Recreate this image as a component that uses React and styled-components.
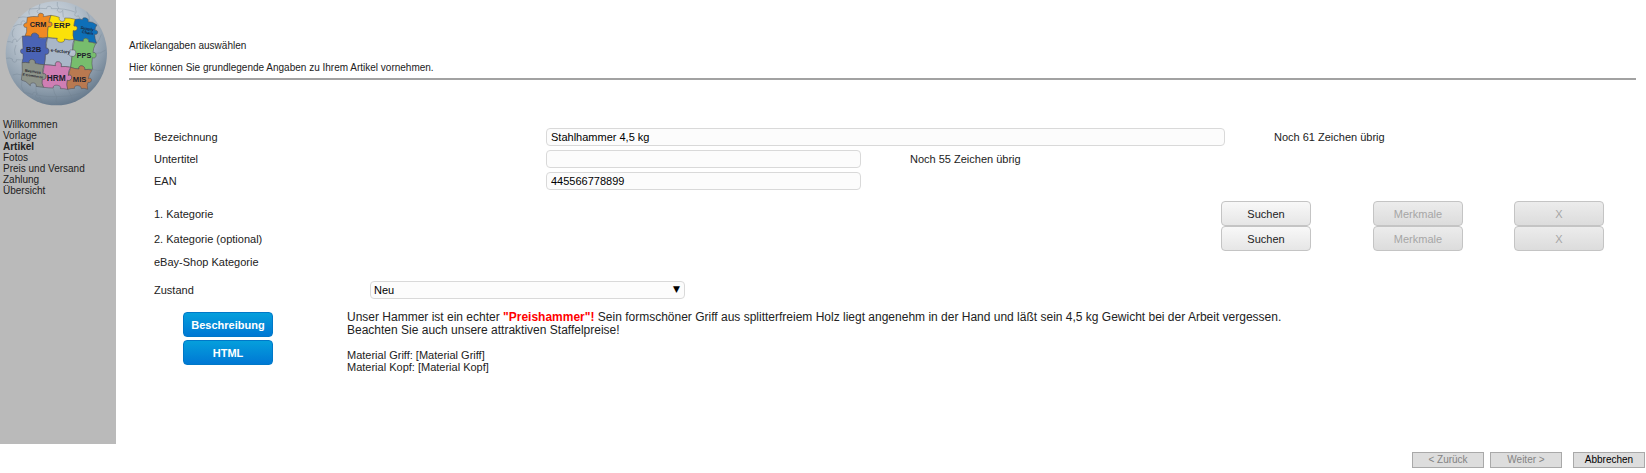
import styled, { createGlobalStyle } from "styled-components";

const GlobalStyle = createGlobalStyle`
  * { box-sizing: border-box; }
  body {
    margin: 0; background-color: #fff; color: #222;
    font-family: "Liberation Sans", Arial, sans-serif; font-size: 11px;
  }
  button, input, select { font-family: inherit; font-size: 11px; }
`;

const Main = styled.div`
  display: flex;
  min-height: 444px;
`;

const Sidebar = styled.aside`
  flex: none; width: 116px;
  background-color: #bababa;
`;

const Globe = styled.svg`
  display: block; width: 116px; height: 110px;
`;

const Menu = styled.nav`
  display: flex; flex-direction: column;
  padding: 9px 3px;
`;

const MenuLink = styled.a`
  font-size: 10px; line-height: 11px; color: #222; text-decoration: none;
  font-weight: ${(props) => (props.$active ? "bold" : "normal")};
`;

const Content = styled.main`
  flex: 1; padding: 40px 10px 0 13px;
`;

const Intro = styled.header`
  padding-bottom: 4px; border-bottom: 2px solid #a2a2a2;
`;

const Title = styled.h1`
  margin: 0 0 10px; font-size: 10px; line-height: 12px; font-weight: normal;
`;

const Text = styled.p`
  margin: 0; font-size: 10px; line-height: 12px;
`;

const Form = styled.form`
  padding: 46px 32px 0 25px;
`;

const Row = styled.div`
  display: flex; align-items: center;
  height: ${(props) => props.$height || 22}px;
`;

const Label = styled.label`
  flex: none; line-height: 14px;
  width: ${(props) => props.$width || 392}px;
`;

const Input = styled.input`
  height: 18px; padding: 0 4px;
  flex: ${(props) => (props.$wide ? "1" : "0 0 315px")};
  border: 1px solid #d9d9d9; border-radius: 4px;
  background-color: #fcfcfc; color: #000;
`;

const Counter = styled.span`
  flex: none; margin-left: 49px;
  width: ${(props) => (props.$wide ? "330px" : "auto")};
`;

const Categories = styled.div`
  padding: 9px 0 8px;
`;

const CategoryRow = styled.div`
  display: flex; align-items: center; justify-content: space-between;
  height: 25px;
`;

const Actions = styled.div`
  display: flex;
`;

const Btn = styled.button`
  width: 90px; height: 25px; padding: 0;
  border: 1px solid #c4c4c4; border-radius: 4px;
  background: linear-gradient(#f8f8f8, #e6e6e6); color: #222;
  &:disabled {
    background: linear-gradient(#ececec, #dcdcdc); color: #a6a6a6;
  }
  &:nth-child(2) { margin-left: 62px; }
  &:nth-child(3) { margin-left: 51px; }
`;

const SelectBox = styled.div`
  position: relative; width: 315px;
  &::after {
    content: "▼"; position: absolute; right: 5px; top: 2px;
    font-family: "DejaVu Sans", sans-serif; font-size: 9px; line-height: 13px; color: #000;
    pointer-events: none;
  }
`;

const Select = styled.select`
  display: block; appearance: none;
  width: 100%; height: 18px; padding: 0 3px;
  border: 1px solid #d9d9d9; border-radius: 4px;
  background-color: #fcfcfc; color: #000;
`;

const Details = styled.div`
  display: flex; padding-top: 12px;
`;

const Tabs = styled.div`
  display: flex; flex-direction: column; gap: 3px;
  width: 193px; padding: 1px 0 0 29px;
`;

const TabBtn = styled.button`
  width: 90px; height: 25px; padding: 0;
  border: 1px solid #0078c8; border-radius: 4px;
  background: linear-gradient(#059fdc, #0078d4);
  color: #fff; font-weight: bold;
`;

const Description = styled.div`
  flex: 1; font-size: 12px; line-height: 13px;
  strong { color: #f00; }
`;

const Material = styled.p`
  margin: 12px 0 0; font-size: 11px; line-height: 12px;
`;

const Footer = styled.footer`
  display: flex; justify-content: flex-end; gap: 6px;
  padding: 8px 1px 5px;
`;

const NavBtn = styled.button`
  width: 72px; height: 16px; padding: 0;
  border: 1px solid #a9a9a9; background-color: #ddd; color: #000;
  && { font-size: 10px; line-height: 12px; }
  &:disabled { color: #838383; }
  &:last-child { margin-left: 5px; }
`;

const menu = ["Willkommen", "Vorlage", "Artikel", "Fotos", "Preis und Versand", "Zahlung", "Übersicht"];

const categories = ["1. Kategorie", "2. Kategorie (optional)"];

const pieces = [
  { fill: "#a9b7c8", d: "M142 113 Q160 116 172 114 C166 127 196 128 191 115 Q206 121 223 118 Q214 134 218 150 C202 146 202 170 216 169 Q215 184 212 202 Q194 198 183 200 C190 182 160 180 167 197 Q150 194 133 194 Q136 176 136 162 C148 168 150 140 138 145 Z" },
  { fill: "#f08a24", d: "M82 52 Q98 48 115 50 C110 37 136 36 130 50 Q140 48 153 46 Q147 58 147 67 C160 61 160 85 145 80 Q142 98 143 112 Q128 116 115 113 C122 98 90 94 95 109 Q84 108 75 108 Q82 96 80 82 C68 84 68 68 80 69 Z" },
  { fill: "#fbe109", d: "M153 46 Q168 48 178 52 C174 67 198 69 194 54 Q210 53 226 58 Q221 70 222 78 C236 74 235 97 220 92 Q218 107 223 118 Q206 122 193 117 C199 131 164 130 172 115 Q158 114 143 112 Q142 96 145 80 C160 85 160 61 147 67 Z" },
  { fill: "#0e6fb8", d: "M226 58 Q239 55 248 59 C245 49 270 53 264 65 Q277 64 291 75 Q284 82 285 91 C296 88 296 106 284 103 Q284 116 290 130 Q276 126 266 126 C269 114 247 110 250 124 Q236 124 222 119 Q218 107 220 92 C236 97 236 74 222 78 Z" },
  { fill: "#4a63b5", d: "M67 108 Q84 108 95 109 C90 94 122 98 115 113 Q128 116 142 113 Q135 130 138 145 C150 140 150 168 136 162 Q136 180 133 194 Q119 194 105 190 C108 175 84 174 88 189 Q78 186 66 188 Q71 174 69 161 C59 162 59 144 69 147 Z" },
  { fill: "#77bd6d", d: "M223 120 Q238 124 250 124 C247 110 269 114 266 126 Q276 126 287 131 Q279 146 279 158 C292 153 292 179 277 173 Q274 191 278 208 Q266 207 254 209 C257 195 233 193 237 207 Q225 207 212 202 Q215 184 216 169 C230 174 232 146 218 150 Z" },
  { fill: "#8d9389", d: "M66 188 Q78 186 88 189 C84 174 108 175 105 190 Q119 194 133 194 Q126 208 129 221 C143 217 142 242 127 238 Q125 251 131 262 Q120 261 108 259 C113 247 88 244 91 257 Q78 242 64 240 Q69 213 66 188Z" },
  { fill: "#cf7eb4", d: "M133 194 Q151 196 167 197 C160 180 190 182 183 200 Q195 198 212 202 Q203 214 205 226 C219 219 219 246 202 241 Q199 253 203 268 Q190 265 181 266 C188 255 156 250 160 264 Q146 264 131 262 Q124 251 127 238 C142 242 143 217 129 221 Z" },
  { fill: "#b97950", d: "M212 202 Q225 207 237 207 C233 193 257 195 254 209 Q265 207 276 211 Q266 224 265 236 C278 229 277 251 264 247 Q260 255 263 268 Q251 263 244 266 C245 254 219 254 224 265 Q213 265 203 268 Q199 253 202 241 C219 246 219 219 205 226 Z" },
];

const marks = [
  { x: 114, y: 80, size: 22, text: "CRM" },
  { x: 186, y: 85, size: 24, text: "ERP" },
  { x: 101, y: 155, size: 23, text: "B2B" },
  { x: 252, y: 173, size: 22, text: "PPS" },
  { x: 169, y: 242, size: 25, text: "HRM" },
  { x: 239, y: 245, size: 23, text: "MIS" },
];

function Logo() {
  return (
    <Globe viewBox="0 0 348 330" role="img" aria-label="factory">
      <defs>
        <radialGradient id="ball" cx="42%" cy="28%" r="78%">
          <stop offset="0" stopColor="#d6dde4" />
          <stop offset="0.4" stopColor="#b8c3ce" />
          <stop offset="0.75" stopColor="#8b9baa" />
          <stop offset="1" stopColor="#5c7084" />
        </radialGradient>
      </defs>
      <ellipse cx="169" cy="160" rx="152" ry="156" fill="url(#ball)" />
      <g fill="none" stroke="#71808e" strokeWidth="1.5" opacity="0.65">
        <path d="M40 80 Q55 70 64 74 C60 58 80 60 77 73 M90 25 Q84 36 88 44 M54 53 Q70 49 82 52 M120 12 Q115 22 119 28 C104 32 114 44 122 38 M172 6 Q170 18 176 25 C164 33 183 43 188 31 L190 52 M90 27 Q120 23 140 26 C138 16 157 17 154 26 Q195 24 227 37 M227 20 Q226 30 229 37 C219 43 227 53 235 47 L241 58 M260 35 Q270 48 268 62" />
        <path d="M22 125 Q32 124 38 128 C36 114 53 114 50 126 L67 108 M19 175 Q29 172 37 177 C35 189 52 190 49 179 L69 180 M43 85 Q32 99 40 112 M48 135 Q40 151 46 165 M38 225 Q51 219 64 225 M66 240 Q60 260 72 278 M108 260 Q106 274 112 282 C99 289 112 301 119 291 L128 310 M72 278 Q90 279 98 284 C97 273 113 275 110 285 Q145 292 170 290 M160 266 Q162 280 170 290 Q165 302 172 314 M203 268 Q215 285 218 304 M170 290 Q209 291 242 280 M263 268 Q275 268 284 254 M278 208 Q291 214 307 211 M288 160 Q300 162 317 150 M290 130 Q299 119 304 103" />
      </g>
      {pieces.map((piece) => (
        <path key={piece.fill} d={piece.d} fill={piece.fill} stroke="#4b4b50" strokeWidth="1.5" />
      ))}
      <g fill="#1d1d2b" fontWeight="bold" textAnchor="middle">
        {marks.map((mark) => (
          <text key={mark.text} x={mark.x} y={mark.y} fontSize={mark.size}>{mark.text}</text>
        ))}
        <text x="181" y="158" fontSize="14" transform="rotate(7 181 158)">e-factory</text>
        <text x="261" y="90" fontSize="12" transform="rotate(10 261 90)">Supply</text>
        <text x="262" y="102" fontSize="12" transform="rotate(10 262 102)">Chain</text>
        <text x="98" y="218" fontSize="11" transform="rotate(9 98 218)">Business</text>
        <text x="98" y="231" fontSize="10" transform="rotate(9 98 231)">E-Commerce</text>
      </g>
    </Globe>
  );
}

function App() {
  return (
    <>
      <GlobalStyle />
      <Main>
        <Sidebar>
          <Logo />
          <Menu>
            {menu.map((item) => (
              <MenuLink key={item} href="#" $active={item === "Artikel"}>{item}</MenuLink>
            ))}
          </Menu>
        </Sidebar>
        <Content>
          <Intro>
            <Title>Artikelangaben auswählen</Title>
            <Text>Hier können Sie grundlegende Angaben zu Ihrem Artikel vornehmen.</Text>
          </Intro>
          <Form>
            <Row>
              <Label htmlFor="name">Bezeichnung</Label>
              <Input id="name" $wide defaultValue="Stahlhammer 4,5 kg" />
              <Counter $wide>Noch 61 Zeichen übrig</Counter>
            </Row>
            <Row>
              <Label htmlFor="subtitle">Untertitel</Label>
              <Input id="subtitle" />
              <Counter>Noch 55 Zeichen übrig</Counter>
            </Row>
            <Row>
              <Label htmlFor="ean">EAN</Label>
              <Input id="ean" defaultValue="445566778899" />
            </Row>
            <Categories>
              {categories.map((category) => (
                <CategoryRow key={category}>
                  <span>{category}</span>
                  <Actions>
                    <Btn type="button">Suchen</Btn>
                    <Btn type="button" disabled>Merkmale</Btn>
                    <Btn type="button" disabled>X</Btn>
                  </Actions>
                </CategoryRow>
              ))}
              <Row>eBay-Shop Kategorie</Row>
            </Categories>
            <Row $height={18}>
              <Label htmlFor="condition" $width={216}>Zustand</Label>
              <SelectBox>
                <Select id="condition">
                  <option>Neu</option>
                </Select>
              </SelectBox>
            </Row>
            <Details>
              <Tabs>
                <TabBtn type="button">Beschreibung</TabBtn>
                <TabBtn type="button">HTML</TabBtn>
              </Tabs>
              <Description>
                Unser Hammer ist ein echter <strong>"Preishammer"!</strong> Sein formschöner Griff aus
                splitterfreiem Holz liegt angenehm in der Hand und läßt sein 4,5 kg Gewicht bei der Arbeit vergessen.
                <br />
                Beachten Sie auch unsere attraktiven Staffelpreise!
                <Material>
                  Material Griff: [Material Griff]
                  <br />
                  Material Kopf: [Material Kopf]
                </Material>
              </Description>
            </Details>
          </Form>
        </Content>
      </Main>
      <Footer>
        <NavBtn type="button" disabled>&lt; Zurück</NavBtn>
        <NavBtn type="button" disabled>Weiter &gt;</NavBtn>
        <NavBtn type="button">Abbrechen</NavBtn>
      </Footer>
    </>
  );
}

export default App;
